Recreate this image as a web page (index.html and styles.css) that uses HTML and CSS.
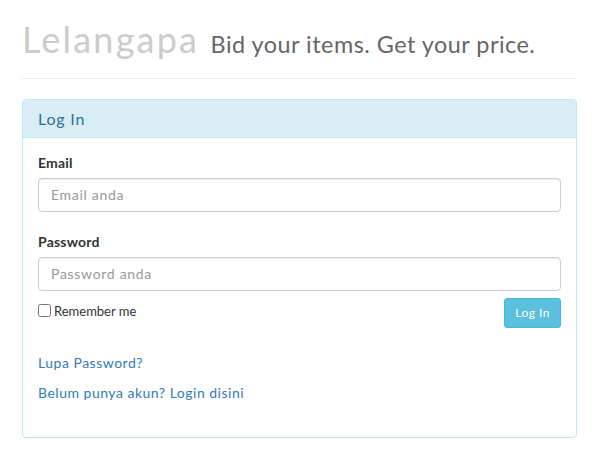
FILE: index.html
```html
<!DOCTYPE html>
<html lang="id">
<head>
<meta charset="utf-8">
<title>Lelangapa - Log In</title>
<link rel="stylesheet" href="styles.css">
</head>
<body>
<div class="container">
  <div class="page-header">
    <h1>Lelangapa <small>Bid your items. Get your price.</small></h1>
  </div>
  <div class="panel">
    <div class="panel-heading">Log In</div>
    <div class="panel-body">
      <form class="login-form">
        <div class="form-group">
          <label for="email">Email</label>
          <input id="email" type="text" class="form-control" placeholder="Email anda">
        </div>
        <div class="form-group">
          <label for="password">Password</label>
          <input id="password" type="password" class="form-control" placeholder="Password anda">
        </div>
        <div class="form-actions">
          <label class="checkbox"><input type="checkbox"><span>Remember me</span></label>
          <button type="button" class="btn">Log In</button>
        </div>
      </form>
      <div class="links">
        <a href="#">Lupa Password?</a>
        <a href="#">Belum punya akun? Login disini</a>
      </div>
    </div>
  </div>
</div>
</body>
</html>
```
FILE: styles.css
```css
* { box-sizing: border-box; }
html, body { margin: 0; padding: 0; }
body {
  font-family: Lato, "Open Sans", sans-serif;
  font-size: 14px;
  line-height: 20px;
  letter-spacing: 0.5px;
  color: #333;
  background: #fff;
}
.container {
  padding: 0 21px 0 22px;
}
.page-header {
  padding-top: 20px;
  padding-bottom: 8px;
  border-bottom: 1px solid #eee;
  margin-bottom: 20px;
}
.page-header h1 {
  margin: 0 0 10px;
  font-size: 36px;
  font-weight: 400;
  line-height: 1.1;
  letter-spacing: 2.2px;
  color: #cccccc;
}
.page-header h1 small {
  font-size: 65%;
  color: #666;
  font-weight: 400;
  letter-spacing: 0.5px;
}
.panel {
  border: 1px solid #bce8f1;
  border-radius: 4px;
  background: #fff;
}
.panel-heading {
  background: #d9edf7;
  color: #31708f;
  border-bottom: 1px solid #bce8f1;
  border-radius: 3px 3px 0 0;
  padding: 10px 15px;
  font-size: 16px;
  line-height: 17px;
  letter-spacing: 0.8px;
}
.panel-body {
  padding: 15px 15px 34px;
}
.form-group {
  display: flex;
  flex-direction: column;
  margin-bottom: 20px;
}
.form-group label {
  font-weight: 700;
  margin-bottom: 5px;
  letter-spacing: 0.2px;
}
.form-control {
  height: 34px;
  padding: 6px 12px;
  font: inherit;
  letter-spacing: 0.7px;
  color: #555;
  border: 1px solid #ccc;
  border-radius: 4px;
  box-shadow: inset 0 1px 1px rgba(0,0,0,.075);
}
.form-control::placeholder { color: #999; }
.form-group:nth-child(2) { margin-bottom: 7px; }
.form-actions {
  display: flex;
  justify-content: space-between;
  align-items: flex-start;
}
.checkbox {
  display: flex;
  align-items: center;
  gap: 3px;
  margin-top: 3px;
  font-size: 13px;
  letter-spacing: 0;
  color: #333;
}
.checkbox input {
  margin: 0;
  width: 13px;
  height: 13px;
}
.btn {
  height: 30px;
  padding: 5px 10px;
  font: inherit;
  font-size: 12px;
  line-height: 18px;
  letter-spacing: 0.5px;
  color: #fff;
  background: #5bc0de;
  border: 1px solid #46b8da;
  border-radius: 3px;
}
.links {
  display: flex;
  flex-direction: column;
  gap: 10px;
  margin-top: 25px;
}
.links a {
  color: #337ab7;
  text-decoration: none;
}
```
